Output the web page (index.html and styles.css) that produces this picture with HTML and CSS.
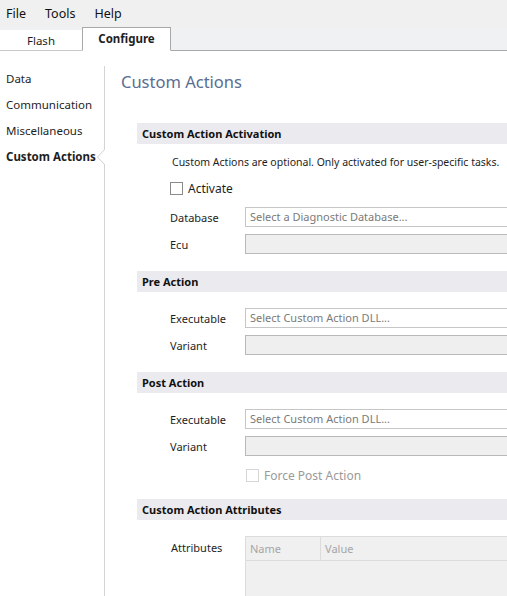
FILE: index.html
```html
<!DOCTYPE html>
<html lang="en">
<head>
    <meta charset="UTF-8">
    <title>Configure - Custom Actions</title>
    <link rel="stylesheet" href="styles.css">
</head>
<body>

<div class="menubar">
    <span>File</span> <span>Tools</span> <span>Help</span>
</div>

<div class="tabs">
    <div class="tab">Flash</div>
    <div class="tab active">Configure</div>
</div>

<div class="main">
    <div class="nav">
        <div class="nav-item">Data</div>
        <div class="nav-item">Communication</div>
        <div class="nav-item">Miscellaneous</div>
        <div class="nav-item current">Custom Actions</div>
        <svg class="pointer" width="8" height="16" viewBox="0 0 8 16">
            <path d="M8 0 L0.5 8 L8 16" fill="#fff" stroke="#d0d0d0" stroke-width="1"/>
        </svg>
    </div>

    <div class="content">
        <h1 class="page-title">Custom Actions</h1>

        <div class="section-head">Custom Action Activation</div>
        <div class="section-body first">
            <p class="hint">Custom Actions are optional. Only activated for user-specific tasks.</p>
            <label class="check"><span class="box"></span>Activate</label>
            <div class="row">
                <span class="label">Database</span>
                <div class="field">Select a Diagnostic Database...</div>
            </div>
            <div class="row">
                <span class="label">Ecu</span>
                <div class="field disabled"></div>
            </div>
        </div>

        <div class="section-head">Pre Action</div>
        <div class="section-body">
            <div class="row">
                <span class="label">Executable</span>
                <div class="field">Select Custom Action DLL...</div>
            </div>
            <div class="row">
                <span class="label">Variant</span>
                <div class="field disabled"></div>
            </div>
        </div>

        <div class="section-head">Post Action</div>
        <div class="section-body">
            <div class="row">
                <span class="label">Executable</span>
                <div class="field">Select Custom Action DLL...</div>
            </div>
            <div class="row">
                <span class="label">Variant</span>
                <div class="field disabled"></div>
            </div>
            <label class="check off"><span class="box"></span>Force Post Action</label>
        </div>

        <div class="section-head">Custom Action Attributes</div>
        <div class="section-body">
            <div class="row table-row">
                <span class="label">Attributes</span>
                <div class="grid">
                    <div class="grid-head">
                        <div class="col-name">Name</div>
                        <div class="col-value">Value</div>
                    </div>
                </div>
            </div>
        </div>
    </div>
</div>

</body>
</html>
```

FILE: styles.css
```css
body {
    margin: 0;
    font-family: "Noto Sans", "Open Sans", sans-serif;
    font-size: 11px;
    color: #1e1e1e;
    background: #fff;
    overflow: hidden;
    height: 596px;
}
.menubar {
    height: 27px;
    background: #f0f0f0;
    display: flex;
    align-items: center;
    font-size: 12.5px;
    color: #111;
}
.menubar span:nth-child(1) { margin-left: 6px; }
.menubar span:nth-child(2) { margin-left: 19px; }
.menubar span:nth-child(3) { margin-left: 19px; }

.tabs {
    height: 23px;
    background: #f0f1f3;
    border-bottom: 1px solid #a8a8a8;
    display: flex;
    align-items: flex-end;
    font-size: 11.5px;
}
.tab {
    width: 82px;
    height: 21px;
    line-height: 21px;
    text-align: center;
    background: #fff;
    border-bottom: 1px solid #c8c8c8;
    margin-bottom: -1px;
    box-sizing: border-box;
}
.tab.active {
    width: 89px;
    height: 24px;
    line-height: 22px;
    font-weight: bold;
    border: 1px solid #a8a8a8;
    border-bottom: 1px solid #fff;
}

.main {
    display: flex;
}
.nav {
    width: 104px;
    flex: none;
    margin-top: 15px;
    height: 600px;
    border-right: 1px solid #d4d4d4;
    position: relative;
    font-size: 11.5px;
}
.nav-item {
    height: 26px;
    line-height: 26px;
    padding-left: 6px;
    white-space: nowrap;
}
.nav-item.current {
    font-weight: bold;
}
.pointer {
    position: absolute;
    right: -1px;
    top: 83px;
}

.content {
    flex: 1;
    min-width: 0;
    padding-left: 16px;
    overflow: hidden;
}
.page-title {
    margin: 18px 0 0 0;
    height: 54px;
    font-size: 16.5px;
    font-weight: normal;
    color: #5a6d93;
    line-height: 26px;
}
.section-head {
    margin-left: 16px;
    height: 21px;
    line-height: 21px;
    padding-left: 5px;
    background: #ebebef;
    font-weight: bold;
    color: #111;
}
.section-body {
    padding: 16px 0 10px 49px;
}
.section-body.first {
    padding-top: 10px;
}
.hint {
    margin: 0 0 9px 2px;
    line-height: 16px;
    font-size: 10.5px;
    white-space: nowrap;
}
.check {
    display: flex;
    align-items: center;
    height: 18px;
    font-size: 12px;
    margin-bottom: 10px;
}
.check .box {
    width: 11px;
    height: 11px;
    border: 1px solid #8a8a8a;
    background: #fff;
    margin-right: 5px;
}
.check.off {
    margin: 10px 0 5px 76px;
    color: #9a9a9a;
}
.check.off .box {
    border-color: #d6d6d6;
}
.row {
    display: flex;
    align-items: center;
    margin-bottom: 7px;
}
.label {
    width: 75px;
    flex: none;
}
.field {
    flex: none;
    width: 320px;
    height: 20px;
    line-height: 18px;
    box-sizing: border-box;
    border: 1px solid #c6c6c6;
    padding-left: 4px;
    color: #7a7a7a;
    white-space: nowrap;
}
.field.disabled {
    background: #efefef;
    border-color: #b9b9b9;
}
.table-row {
    align-items: flex-start;
}
.table-row .label {
    padding-top: 4px;
    padding-left: 1px;
    width: 74px;
}
.grid {
    flex: none;
    width: 320px;
    height: 80px;
    background: #f0f0f0;
    border: 1px solid #dcdcdc;
}
.grid-head {
    display: flex;
    height: 23px;
    line-height: 23px;
    border-bottom: 1px solid #dcdcdc;
    color: #a6a6a6;
}
.col-name {
    width: 70px;
    padding-left: 4px;
    border-right: 1px solid #dcdcdc;
}
.col-value {
    padding-left: 4px;
}
```
